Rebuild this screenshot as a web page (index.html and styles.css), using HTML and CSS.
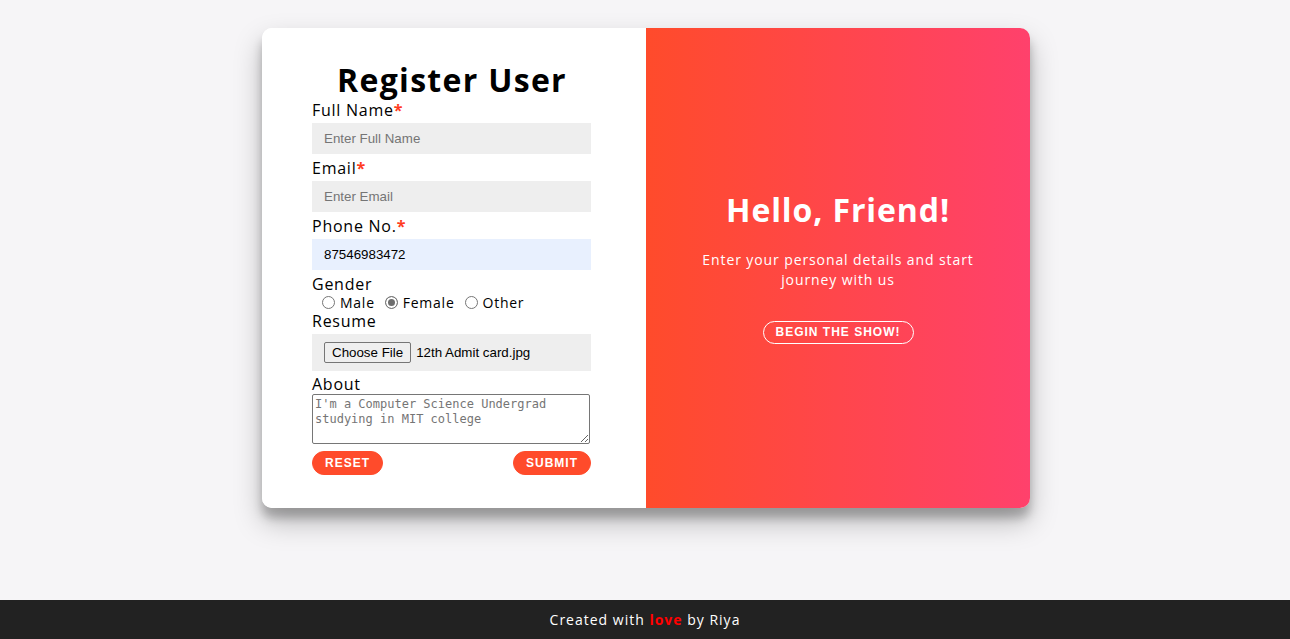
FILE: index.html
```html
<!DOCTYPE html>
<html lang="en">
<head>
<meta charset="utf-8">
<title>Register User</title>
<link rel="stylesheet" href="styles.css">
</head>
<body>
<main class="page">
  <div class="container">
    <div class="form-panel">
      <form class="form">
        <h1 class="title">Register User</h1>
        <label class="label">Full Name<span class="req">*</span></label>
        <input class="field" type="text" placeholder="Enter Full Name">
        <label class="label">Email<span class="req">*</span></label>
        <input class="field" type="email" placeholder="Enter Email">
        <label class="label">Phone No.<span class="req">*</span></label>
        <input class="field field-filled" type="text" value="87546983472">
        <label class="label">Gender</label>
        <div class="radios">
          <label class="opt"><input class="radio" type="radio" name="g">Male</label>
          <label class="opt"><input class="radio" type="radio" name="g" checked>Female</label>
          <label class="opt"><input class="radio" type="radio" name="g">Other</label>
        </div>
        <label class="label">Resume</label>
        <div class="file-box">
          <span class="file-btn">Choose File</span>
          <span class="file-name">12th Admit card.jpg</span>
        </div>
        <label class="label">About</label>
        <textarea class="about" placeholder="I'm a Computer Science Undergrad studying in MIT college"></textarea>
        <div class="actions">
          <button type="button" class="btn">Reset</button>
          <button type="button" class="btn">Submit</button>
        </div>
      </form>
    </div>
    <div class="overlay-panel">
      <h1 class="hello">Hello, Friend!</h1>
      <p class="lead">Enter your personal details and start journey with us</p>
      <button type="button" class="btn btn-ghost">Begin the show!</button>
    </div>
  </div>
</main>
<footer class="footer">
  <p class="footer-text">Created with <span class="love">love</span> by Riya</p>
</footer>
</body>
</html>
```
FILE: styles.css
```css
* { box-sizing: border-box; }

html, body {
  margin: 0;
  height: 100%;
}

body {
  background: #f6f5f7;
  font-family: "Open Sans", "Noto Sans", sans-serif;
  display: flex;
  flex-direction: column;
  min-height: 100vh;
}

.page {
  flex: 1;
  display: flex;
  justify-content: center;
  align-items: flex-start;
  padding: 28px 0 0 2px;
}

.container {
  width: 768px;
  height: 480px;
  background: #fff;
  border-radius: 10px;
  overflow: hidden;
  display: flex;
  box-shadow: 0 14px 28px rgba(0,0,0,0.25), 0 10px 10px rgba(0,0,0,0.22);
}

.form-panel {
  width: 384px;
  background: #fff;
  display: flex;
  flex-direction: column;
  justify-content: center;
  padding: 0 50px;
}

.form {
  display: flex;
  flex-direction: column;
  align-items: flex-start;
  margin: 0;
}

.title {
  align-self: stretch;
  text-align: center;
  margin: 0 0 2px -4px;
  font-size: 32px;
  line-height: 36px;
  font-weight: 700;
  letter-spacing: 1.3px;
  color: #000;
}

.label {
  display: block;
  font-size: 16px;
  line-height: 20px;
  letter-spacing: 0.75px;
  color: #000;
}

.req {
  color: #ff3b1f;
  font-weight: 700;
}

.field {
  width: 279px;
  height: 31px;
  margin: 3px 0 4px;
  padding: 0 12px;
  border: none;
  background: #eee;
  font-family: "Liberation Sans", Arial, sans-serif;
  font-size: 13.33px;
  color: #000;
  outline: none;
}

.field::placeholder { color: #757575; }

.field-filled { background: #e8f0fe; }

.radios {
  display: flex;
  align-items: center;
  height: 17px;
  padding-left: 10px;
  font-size: 14px;
  letter-spacing: 0.75px;
}

.opt {
  display: inline-flex;
  align-items: center;
  margin-right: 10px;
}

.radio {
  appearance: none;
  -webkit-appearance: none;
  width: 13px;
  height: 13px;
  margin: 0 5px 0 0;
  border: 1px solid #767676;
  border-radius: 50%;
  background: #fff;
}

.radio:checked {
  background: #6e6e6e;
  box-shadow: inset 0 0 0 2px #fff;
}

.file-box {
  width: 279px;
  height: 37px;
  margin: 3px 0 3px;
  padding: 0 12px;
  background: #eee;
  display: flex;
  align-items: center;
  font-family: "Liberation Sans", Arial, sans-serif;
  font-size: 13.33px;
}

.file-btn {
  display: inline-block;
  height: 21px;
  line-height: 19px;
  padding: 0 7px;
  border: 1px solid #767676;
  border-radius: 2px;
  background: #efefef;
  color: #000;
  margin-right: 5px;
}

.file-name { color: #000; }

.about {
  width: 278px;
  height: 50px;
  margin: 0;
  padding: 2px 2px;
  border: 1px solid #767676;
  border-radius: 2px;
  font-family: "DejaVu Sans Mono", "Liberation Mono", monospace;
  font-size: 12px;
  line-height: 15px;
  resize: both;
}

.about::placeholder { color: #757575; }

.actions {
  width: 279px;
  margin-top: 7px;
  display: flex;
  justify-content: space-between;
}

.btn {
  height: 24px;
  padding: 0 12px;
  border: 1px solid #ff4b2b;
  border-radius: 20px;
  background: #ff4b2b;
  color: #fff;
  font-family: "Liberation Sans", Arial, sans-serif;
  font-size: 12px;
  font-weight: 700;
  letter-spacing: 1px;
  text-transform: uppercase;
  line-height: 22px;
  cursor: pointer;
}

.overlay-panel {
  width: 384px;
  background: linear-gradient(to right, #ff4b2b, #ff416c);
  color: #fff;
  display: flex;
  flex-direction: column;
  align-items: center;
  justify-content: center;
  padding: 0 40px;
  text-align: center;
}

.hello {
  margin: 0;
  font-size: 32px;
  line-height: 36px;
  font-weight: 700;
  letter-spacing: 0.9px;
}

.lead {
  margin: 22px 0 31px;
  font-size: 14px;
  line-height: 20px;
  font-weight: 400;
  letter-spacing: 0.9px;
}

.btn-ghost {
  height: 23px;
  line-height: 21px;
  background: transparent;
  border-color: #fff;
}

.footer {
  height: 39px;
  background: #222;
  color: #fff;
  display: flex;
  align-items: center;
  justify-content: center;
}

.footer-text {
  margin: 0;
  font-size: 14px;
  letter-spacing: 1px;
}

.love {
  color: #ff0000;
  font-weight: 700;
}
```
